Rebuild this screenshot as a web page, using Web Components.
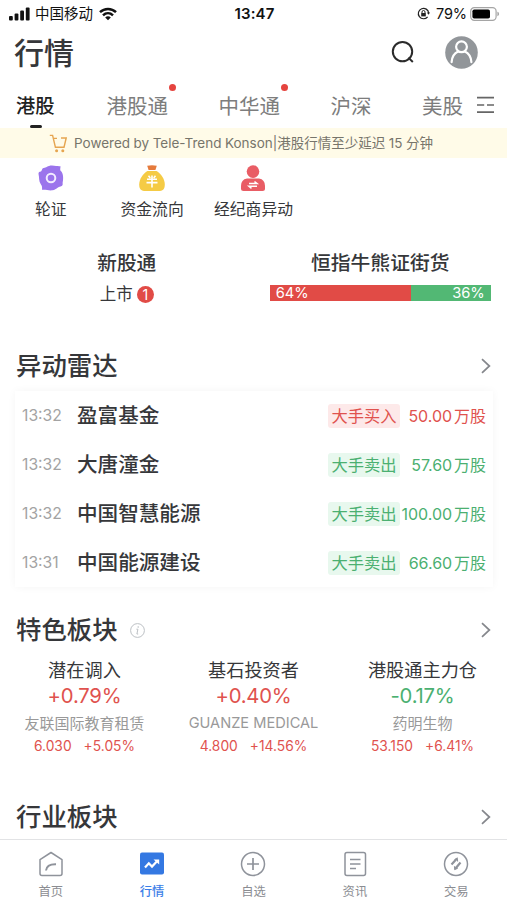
<!DOCTYPE html>
<html lang="zh-CN">
<head>
<meta charset="utf-8">
<meta name="viewport" content="width=device-width, initial-scale=1">
<title>行情</title>
<style>
    html, body {
        margin: 0;
        padding: 0;
    }

    body {
        background: #fff;
        color: #36373a;
        font-family: Inter, "Noto Sans CJK SC", sans-serif;
        height: 900px;
        overflow: hidden;
        width: 507px;
    }
</style>
</head>
<body>

<market-app></market-app>

<script>
function define(name, html) {
    const template = document.createElement('template');
    template.innerHTML = html;

    window.customElements.define(name, class extends HTMLElement {
        constructor() {
            super();
            this._shadowRoot = this.attachShadow({ mode: 'open' });
            this._shadowRoot.appendChild(template.content.cloneNode(true));
        }
    });
}

define('status-bar', `
<style>
    :host {
        align-items: center;
        box-sizing: border-box;
        color: #111;
        display: grid;
        font-size: 14.5px;
        grid-template-columns: 1fr auto 1fr;
        height: 27px;
        line-height: 27px;
        padding: 0 7px 0 9px;
    }

    div {
        align-items: center;
        display: flex;
    }

    svg {
        display: block;
        flex: none;
    }

    .carrier {
        margin: 0 6px 0 5px;
    }

    .time {
        font-size: 15px;
        font-weight: 600;
        letter-spacing: 0.1px;
    }

    .right {
        justify-content: flex-end;
    }

    .percent {
        letter-spacing: -0.1px;
        margin: 0 3px 0 6px;
    }
</style>

<div>
    <svg width="21" height="14" viewBox="0 0 21 14" fill="#111">
        <rect x="0" y="9" width="3.8" height="4.5" rx="1"/>
        <rect x="5.6" y="6.5" width="3.8" height="7" rx="1"/>
        <rect x="11.2" y="3.5" width="3.8" height="10" rx="1"/>
        <rect x="16.8" y="0.5" width="3.8" height="13" rx="1"/>
    </svg>
    <span class="carrier">中国移动</span>
    <svg width="18" height="14" viewBox="0 0 18 14" fill="none" stroke="#111" stroke-width="2.5">
        <path d="M1 5.2C5.5 0.9 12.5 0.9 17 5.2"/>
        <path d="M4 8.3C6.9 5.6 11.1 5.6 14 8.3"/>
        <path d="M9 13.2L6.2 10.4C7.8 9 10.2 9 11.8 10.4Z" fill="#111" stroke="none"/>
    </svg>
</div>
<span class="time">13:47</span>
<div class="right">
    <svg width="13" height="13" viewBox="0 0 13 13" fill="none" stroke="#222" stroke-width="1.2">
        <path d="M10.6 9.8A5.2 5.2 0 1 1 11.7 6"/>
        <path d="M9.9 5.4H13L11.5 7.8Z" fill="#222" stroke="none"/>
        <rect x="4.2" y="6" width="4.6" height="3.4" fill="#222" stroke="none"/>
        <path d="M5 6V5A1.5 1.5 0 0 1 8 5V6" stroke-width="1"/>
    </svg>
    <span class="percent">79%</span>
    <svg width="30" height="14" viewBox="0 0 30 14">
        <rect x="0.7" y="0.7" width="25.4" height="12.6" rx="3.6" fill="#fff" stroke="#a5a5a5" stroke-width="1.2"/>
        <rect x="2.4" y="2.4" width="17.6" height="9.2" rx="1.8" fill="#000"/>
        <path d="M27.4 4.8C29.6 5.4 29.6 8.6 27.4 9.2Z" fill="#a5a5a5"/>
    </svg>
</div>
`);

define('page-header', `
<style>
    :host {
        align-items: center;
        box-sizing: border-box;
        display: flex;
        height: 53px;
        padding: 0 29px 0 14px;
    }

    h1 {
        flex: 1;
        font-size: 30px;
        font-weight: 500;
        line-height: 53px;
        margin: 0;
    }

    svg {
        display: block;
        margin-bottom: 2px;
    }

    .search {
        margin-right: 30px;
    }
</style>

<h1><slot></slot></h1>
<svg class="search" width="25" height="25" viewBox="0 0 25 25" fill="none" stroke="#2b2b2b" stroke-width="2">
    <circle cx="12.5" cy="11.6" r="9.7"/>
    <path d="M18.3 17.6L22.8 22"/>
</svg>
<svg width="33" height="33" viewBox="0 0 33 33" fill="none" stroke="#fff" stroke-width="2.2" stroke-linecap="round">
    <circle cx="16.5" cy="16.5" r="16.3" fill="#92969a" stroke="none"/>
    <circle cx="16.5" cy="10.8" r="5.4"/>
    <path d="M6.6 26.2C7 20.4 10 17 13.2 15.6M19.8 15.6C23 17 26 20.4 26.4 26.2"/>
</svg>
`);

define('market-tab', `
<style>
    :host {
        color: #7d7d7d;
        display: block;
        font-size: 20.5px;
        height: 48px;
        line-height: 53px;
        position: relative;
    }

    :host([active]) {
        color: #222;
        font-size: 19.3px;
        font-weight: 500;
    }

    :host([active])::after {
        background: #222;
        border-radius: 2px;
        bottom: 0;
        content: "";
        height: 3.5px;
        left: 14px;
        position: absolute;
        width: 12px;
    }

    :host([dot])::before {
        background: #e5443f;
        border-radius: 50%;
        content: "";
        height: 7.5px;
        position: absolute;
        right: -8px;
        top: 3.5px;
        width: 7.5px;
    }
</style>

<slot></slot>
`);

define('market-tabs', `
<style>
    :host {
        align-items: center;
        box-sizing: border-box;
        display: flex;
        height: 48px;
        justify-content: space-between;
        padding: 0 12px 0 16px;
    }

    nav {
        display: flex;
        gap: 50.5px;
    }

    nav ::slotted([active]) {
        margin-right: 1.5px;
    }

    svg {
        display: block;
        margin-top: 2px;
    }
</style>

<nav><slot></slot></nav>
<svg width="19" height="18" viewBox="0 0 19 18" fill="none" stroke="#666" stroke-width="1.7">
    <path d="M1 1.6H18M1 9H8.2M11 9H18M1 16.2H18"/>
</svg>
`);

define('notice-bar', `
<style>
    :host {
        align-items: center;
        background: #fffbe8;
        box-sizing: border-box;
        color: #77756b;
        display: flex;
        font-size: 13.5px;
        height: 30px;
        line-height: 30px;
        padding-left: 49px;
        white-space: nowrap;
        word-spacing: -0.3px;
    }

    svg {
        display: block;
        margin-right: 7px;
    }
</style>

<svg width="18" height="19" viewBox="0 0 18 19" fill="none" stroke="#e6a550" stroke-width="1.4">
    <path d="M0.8 1.4H3.6L6.4 13.2H15L17.2 4H12M4.4 4.4H8"/>
    <circle cx="7.6" cy="16.8" r="1.5" fill="#e6a550" stroke="none"/>
    <circle cx="13.8" cy="16.8" r="1.5" fill="#e6a550" stroke="none"/>
</svg>
<slot></slot>
`);

define('short-cut', `
<style>
    :host {
        align-items: center;
        display: flex;
        flex-direction: column;
        font-size: 15.8px;
        white-space: nowrap;
    }

    .icon {
        height: 26px;
        margin-bottom: 7px;
    }

    span {
        line-height: 24px;
    }
</style>

<div class="icon"><slot name="icon"></slot></div>
<span><slot></slot></span>
`);

define('short-cuts', `
<style>
    :host {
        box-sizing: border-box;
        display: grid;
        grid-template-columns: repeat(5, 1fr);
        height: 87px;
        padding-top: 7px;
    }
</style>

<slot></slot>
`);

define('new-shares', `
<style>
    :host {
        align-items: center;
        display: flex;
        flex-direction: column;
    }

    h3 {
        font-size: 19.7px;
        font-weight: 500;
        line-height: 32px;
        margin: 0;
    }

    p {
        align-items: center;
        display: flex;
        font-size: 16.5px;
        gap: 4px;
        line-height: 30px;
        margin: 0;
    }

    b {
        background: #e14b46;
        border-radius: 50%;
        color: #fff;
        font-size: 14px;
        font-weight: 400;
        height: 17px;
        line-height: 17px;
        text-align: center;
        width: 17px;
    }
</style>

<h3><slot></slot></h3>
<p><slot name="label"></slot><b><slot name="count"></slot></b></p>
`);

define('ratio-bar', `
<style>
    :host {
        align-items: center;
        display: flex;
        flex-direction: column;
    }

    h3 {
        font-size: 19.8px;
        font-weight: 500;
        line-height: 32px;
        margin: 0 0 6px;
    }

    .bar {
        color: #fff;
        display: flex;
        font-size: 14.7px;
        height: 16px;
        line-height: 17px;
        width: 221px;
    }

    .bull {
        background: #e14b46;
        box-sizing: border-box;
        padding-left: 6px;
        width: 141px;
    }

    .bear {
        background: #52b874;
        box-sizing: border-box;
        flex: 1;
        padding-right: 6px;
        text-align: right;
    }
</style>

<h3><slot></slot></h3>
<div class="bar">
    <div class="bull"><slot name="bull"></slot></div>
    <div class="bear"><slot name="bear"></slot></div>
</div>
`);

define('section-title', `
<style>
    :host {
        align-items: center;
        box-sizing: border-box;
        display: flex;
        height: 50px;
        padding: 0 16px;
    }

    h2 {
        font-size: 25.4px;
        font-weight: 500;
        line-height: 44px;
        margin: 0 12px 0 0;
    }

    .extra {
        flex: 1;
    }

    svg {
        display: block;
    }
</style>

<h2><slot></slot></h2>
<div class="extra"><slot name="extra"></slot></div>
<svg width="10" height="16" viewBox="0 0 10 16" fill="none" stroke="#85878c" stroke-width="1.7">
    <path d="M1 1.2L8.4 8L1 14.8"/>
</svg>
`);

define('radar-row', `
<style>
    :host {
        align-items: center;
        color: #4bb071;
        display: flex;
        height: 48.8px;
        line-height: 48px;
        white-space: nowrap;
    }

    :host([buy]) {
        color: #e0524e;
    }

    .time {
        color: #a3a3a3;
        font-size: 15.7px;
        width: 55px;
    }

    .name {
        color: #36373a;
        flex: 1;
        font-size: 20.6px;
        font-weight: 500;
    }

    .tag {
        background: #e8f8ee;
        border-radius: 3px;
        box-sizing: border-box;
        font-size: 16.3px;
        height: 24px;
        line-height: 24px;
        text-align: center;
        width: 72px;
    }

    :host([buy]) .tag {
        background: #fde9e9;
    }

    .amount {
        display: flex;
        font-size: 16px;
        justify-content: flex-end;
        width: 86px;
        word-spacing: -2.7px;
    }
</style>

<span class="time"><slot name="time"></slot></span>
<span class="name"><slot></slot></span>
<span class="tag"><slot name="tag"></slot></span>
<span class="amount"><slot name="amount"></slot></span>
`);

define('radar-card', `
<style>
    :host {
        background: #fff;
        box-shadow: 0 0 8px rgba(0, 0, 0, 0.045);
        box-sizing: border-box;
        display: block;
        height: 196px;
        margin: 0 14px 0 15px;
        padding: 1px 7px 0;
    }
</style>

<slot></slot>
`);

define('plate-item', `
<style>
    :host {
        align-items: center;
        color: #e0524e;
        display: flex;
        flex-direction: column;
        white-space: nowrap;
    }

    .name {
        color: #36373a;
        font-size: 18.2px;
        line-height: 26px;
    }

    .change {
        font-size: 20.3px;
        letter-spacing: -0.2px;
        line-height: 25px;
    }

    :host([down]) .change {
        color: #4bb071;
    }

    .stock {
        color: #999;
        font-size: 15px;
        line-height: 31px;
    }

    :host([latin]) .stock {
        font-size: 14.6px;
    }

    .quote {
        display: flex;
        font-size: 13.8px;
        gap: 12px;
        line-height: 14px;
    }
</style>

<span class="name"><slot></slot></span>
<span class="change"><slot name="change"></slot></span>
<span class="stock"><slot name="stock"></slot></span>
<span class="quote"><slot name="price"></slot><slot name="rate"></slot></span>
`);

define('tab-item', `
<style>
    :host {
        align-items: center;
        color: #8b8d92;
        display: flex;
        flex-direction: column;
        font-size: 12.3px;
    }

    :host([active]) {
        color: #3b7ee8;
        font-weight: 500;
    }

    .icon {
        height: 26px;
    }

    span {
        line-height: 30px;
    }
</style>

<div class="icon"><slot name="icon"></slot></div>
<span><slot></slot></span>
`);

define('tab-bar', `
<style>
    :host {
        background: #fff;
        border-top: 1px solid #e2e3e5;
        box-sizing: border-box;
        display: grid;
        grid-template-columns: repeat(5, 1fr);
        height: 61px;
        padding-top: 11px;
    }
</style>

<slot></slot>
`);

define('market-app', `
<style>
    :host {
        display: flex;
        flex-direction: column;
        height: 900px;
        width: 507px;
    }

    :host > * {
        flex-shrink: 0;
    }

    svg {
        display: block;
    }

    .overview {
        box-sizing: border-box;
        display: grid;
        grid-template-columns: 1fr 1fr;
        height: 96px;
        padding-top: 2px;
    }

    .plates {
        box-sizing: border-box;
        display: grid;
        grid-template-columns: repeat(3, 1fr);
        height: 140px;
        padding-top: 2px;
    }

    .radar {
        margin-bottom: 18px;
    }

    .industry {
        height: 44px;
    }
</style>

<status-bar></status-bar>
<page-header>行情</page-header>
<market-tabs>
    <market-tab active>港股</market-tab>
    <market-tab dot>港股通</market-tab>
    <market-tab dot>中华通</market-tab>
    <market-tab>沪深</market-tab>
    <market-tab>美股</market-tab>
</market-tabs>
<notice-bar>Powered by Tele-Trend Konson|港股行情至少延迟 15 分钟</notice-bar>

<short-cuts>
    <short-cut>
        <svg slot="icon" width="26" height="26" viewBox="0 0 26 26">
            <path d="M5.5 3C8 3.2 9.5 0.5 14 0.6C18 0.7 20 1.6 22.5 1.2C22.5 3.5 21.5 5 23.4 6.5C25.6 9.5 25.4 14.5 24.6 18C25 20 24.5 21 22.5 21.5C20 21.5 19 24.5 14.5 25.3C10.5 25.8 7.5 24.2 4 24.8C4.2 22 4.2 21 2.8 19.2C0.6 16 1.4 12.5 0.6 9.5C0.2 7.5 1 6.5 3 6.5C4.2 5.5 3.8 3.5 5.5 3Z" fill="#9b74ec"/>
            <circle cx="13" cy="13" r="4.3" fill="none" stroke="#f2ecff" stroke-width="2"/>
        </svg>
        轮证
    </short-cut>
    <short-cut>
        <svg slot="icon" width="26" height="26" viewBox="0 0 26 26">
            <path d="M8.5 6H17.5C22 8.5 25.8 14 25.8 19.5C25.8 24.5 23.5 26 19.5 26H6.5C2.5 26 0.2 24.5 0.2 19.5C0.2 14 4 8.5 8.5 6Z" fill="#f5cb45"/>
            <path d="M8.2 0.8Q13 -0.3 17.8 0.8L16.4 5H9.6Z" fill="#e57a3c"/>
            <path d="M9.5 10.8L11.3 13M16.5 10.8L14.7 13M8 14.3H18M7.5 17.6H18.5M13 10.5V22.5" stroke="#fff" stroke-width="1.6" fill="none"/>
        </svg>
        资金流向
    </short-cut>
    <short-cut>
        <svg slot="icon" width="26" height="26" viewBox="0 0 26 26">
            <circle cx="13" cy="6.6" r="6.3" fill="#e95d65"/>
            <path d="M7 13.5H19Q25 14.5 25 21V23.5Q25 26 22.5 26H3.5Q1 26 1 23.5V21Q1 14.5 7 13.5Z" fill="#e95d65"/>
            <path d="M9 18.5H17L14.5 16.5M17 21.3H9L11.5 23.3" stroke="#fff" stroke-width="1.5" fill="none"/>
        </svg>
        经纪商异动
    </short-cut>
</short-cuts>

<div class="overview">
    <new-shares>
        新股通
        <span slot="label">上市</span>
        <span slot="count">1</span>
    </new-shares>
    <ratio-bar>
        恒指牛熊证街货
        <span slot="bull">64%</span>
        <span slot="bear">36%</span>
    </ratio-bar>
</div>

<section-title>异动雷达</section-title>
<radar-card class="radar">
    <radar-row buy>
        <span slot="time">13:32</span>
        盈富基金
        <span slot="tag">大手买入</span>
        <span slot="amount">50.00 万股</span>
    </radar-row>
    <radar-row>
        <span slot="time">13:32</span>
        大唐潼金
        <span slot="tag">大手卖出</span>
        <span slot="amount">57.60 万股</span>
    </radar-row>
    <radar-row>
        <span slot="time">13:32</span>
        中国智慧能源
        <span slot="tag">大手卖出</span>
        <span slot="amount">100.00 万股</span>
    </radar-row>
    <radar-row>
        <span slot="time">13:31</span>
        中国能源建设
        <span slot="tag">大手卖出</span>
        <span slot="amount">66.60 万股</span>
    </radar-row>
</radar-card>

<section-title>
    特色板块
    <svg slot="extra" width="15" height="15" viewBox="0 0 15 15" fill="none" stroke="#bcc0c4" stroke-width="1">
        <circle cx="7.5" cy="7.5" r="6.9"/>
        <path d="M6.4 6.2H7.9L6.9 11H8.2"/>
        <circle cx="8.2" cy="4" r="0.8" fill="#bcc0c4" stroke="none"/>
    </svg>
</section-title>
<div class="plates">
    <plate-item>
        潜在调入
        <span slot="change">+0.79%</span>
        <span slot="stock">友联国际教育租赁</span>
        <span slot="price">6.030</span>
        <span slot="rate">+5.05%</span>
    </plate-item>
    <plate-item latin>
        基石投资者
        <span slot="change">+0.40%</span>
        <span slot="stock">GUANZE MEDICAL</span>
        <span slot="price">4.800</span>
        <span slot="rate">+14.56%</span>
    </plate-item>
    <plate-item down>
        港股通主力仓
        <span slot="change">-0.17%</span>
        <span slot="stock">药明生物</span>
        <span slot="price">53.150</span>
        <span slot="rate">+6.41%</span>
    </plate-item>
</div>

<section-title class="industry">行业板块</section-title>

<tab-bar>
    <tab-item>
        <svg slot="icon" width="26" height="26" viewBox="0 0 26 26" fill="none" stroke="#8f939b" stroke-width="1.5" stroke-linejoin="round">
            <path d="M13 1.5L24 8.7V22.5Q24 24.5 22 24.5H4Q2 24.5 2 22.5V8.7Z"/>
            <path d="M8 19.5C8.5 15.5 12 13 18 13.2" stroke-width="2"/>
        </svg>
        首页
    </tab-item>
    <tab-item active>
        <svg slot="icon" width="26" height="26" viewBox="0 0 26 26" fill="none">
            <rect x="1" y="1.5" width="24" height="22" rx="2" fill="#3478e2"/>
            <path d="M6 16.5L9.8 12.3L13 15.6L18 10.3" stroke="#fff" stroke-width="2.2"/>
            <path d="M14.5 8.5H20.2V13.5Z" fill="#fff"/>
        </svg>
        行情
    </tab-item>
    <tab-item>
        <svg slot="icon" width="26" height="26" viewBox="0 0 26 26" fill="none" stroke="#8f939b" stroke-width="1.5">
            <circle cx="13" cy="13" r="11.5"/>
            <path d="M13 7V19M7 13H19" stroke-width="1.7"/>
        </svg>
        自选
    </tab-item>
    <tab-item>
        <svg slot="icon" width="26" height="26" viewBox="0 0 26 26" fill="none" stroke="#8f939b" stroke-width="1.5">
            <rect x="3" y="1.5" width="20.5" height="23" rx="2"/>
            <path d="M8 8.5H18.5M8 13H18.5M8 17.5H14" stroke-width="1.7"/>
        </svg>
        资讯
    </tab-item>
    <tab-item>
        <svg slot="icon" width="26" height="26" viewBox="0 0 26 26" fill="none" stroke="#8f939b" stroke-width="1.5">
            <circle cx="13" cy="13" r="11.5"/>
            <path d="M14 7.5L8.5 13.5M17.5 11.5L12 18" stroke-width="2.2"/>
            <path d="M11.5 9.2L14.2 7.4L14.6 10.5M11.5 15.2L11.8 18.3L14.8 17" stroke-width="1.2"/>
        </svg>
        交易
    </tab-item>
</tab-bar>
`);
</script>
</body>
</html>
